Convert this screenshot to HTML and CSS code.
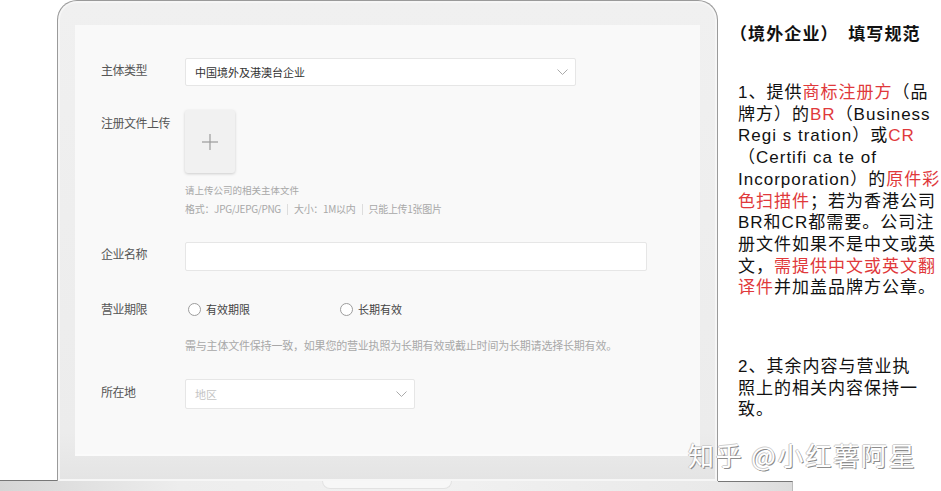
FILE: index.html
```html
<!DOCTYPE html>
<html lang="zh-CN">
  <head>
    <meta charset="UTF-8" />
    <title>境外企业 填写规范</title>
    <link rel="stylesheet" href="styles.css">
  </head>
  <body>
    <div class="scene">
      <div class="top">
        <div class="gutter"></div>

        <div class="lid">
          <div class="screen">
            <div class="row row-type">
              <div class="label">主体类型</div>
              <div class="select select-wide">
                <span>中国境外及港澳台企业</span>
                <svg class="chevron" width="11" height="6" viewBox="0 0 11 6"><polyline points="0.5,0.5 5.5,5.5 10.5,0.5" /></svg>
              </div>
            </div>

            <div class="row row-upload">
              <div class="label">注册文件上传</div>
              <div class="field">
                <div class="upload">
                  <svg width="16" height="16" viewBox="0 0 16 16"><line x1="8" y1="0" x2="8" y2="16" /><line x1="0" y1="8" x2="16" y2="8" /></svg>
                </div>
                <p class="hint hint-small">请上传公司的相关主体文件</p>
                <p class="hint hint-format">格式：JPG/JEPG/PNG<span class="sep"></span>大小：1M以内<span class="sep"></span>只能上传1张图片</p>
              </div>
            </div>

            <div class="row row-name">
              <div class="label">企业名称</div>
              <div class="input"></div>
            </div>

            <div class="row row-term">
              <div class="label">营业期限</div>
              <div class="radios">
                <label class="radio-item"><span class="radio"></span>有效期限</label>
                <label class="radio-item"><span class="radio"></span>长期有效</label>
              </div>
            </div>
            <p class="hint hint-term">需与主体文件保持一致，如果您的营业执照为长期有效或截止时间为长期请选择长期有效。</p>

            <div class="row row-place">
              <div class="label">所在地</div>
              <div class="select select-short">
                <span class="placeholder">地区</span>
                <svg class="chevron" width="11" height="6" viewBox="0 0 11 6"><polyline points="0.5,0.5 5.5,5.5 10.5,0.5" /></svg>
              </div>
            </div>
          </div>
        </div>

        <div class="notes">
          <h2>（境外企业）　填写规范</h2>
          <p class="para">1、提供<em>商标注册方</em>（品<br>牌方）的<em>BR</em>（Business<br>Regi s tration）或<em>CR</em><br>（Certifi ca te of<br>Incorporation）的<em>原件彩<br>色扫描件</em>；若为香港公司<br>BR和CR都需要。公司注<br>册文件如果不是中文或英<br>文，<em>需提供中文或英文翻<br>译件</em>并加盖品牌方公章。</p>
          <p class="para para-two">2、其余内容与营业执<br>照上的相关内容保持一<br>致。</p>
        </div>
      </div>

      <div class="base">
        <div class="base-main"><div class="notch"></div></div>
        <div class="base-end"></div>
      </div>

      <div class="watermark">知乎 @小红薯阿星</div>
    </div>
  </body>
</html>
```

FILE: styles.css
```css
body {
  margin: 0;
  background: #ffffff;
  font-family: "Liberation Sans", "Noto Sans CJK SC", sans-serif;
}

.scene {
  position: relative;
  width: 941px;
  height: 491px;
  overflow: hidden;
}

.top {
  display: flex;
  height: 481px;
}

.gutter {
  width: 57px;
  flex: none;
  border-bottom: 1px solid #777777;
  box-sizing: border-box;
}

/* laptop lid */
.lid {
  width: 661px;
  flex: none;
  box-sizing: border-box;
  border: 1px solid #9a9a9a;
  border-bottom: none;
  border-radius: 20px 20px 0 0;
  padding: 24px 17px 0 17px;
  background: linear-gradient(#f0f0f0, #ececec 90%, #e4e4e4);
  box-shadow: inset 0 0 0 2px #f6f6f6;
}

.screen {
  height: 431px;
  box-sizing: border-box;
  padding: 33px 0 0 26px;
  background: #f9f9f9;
  border-bottom: 2px solid #fbfbfb;
  font-family: "Noto Sans CJK SC", sans-serif;
}

.row {
  display: flex;
  align-items: flex-start;
}

.label {
  width: 84px;
  flex: none;
  font-size: 12px;
  letter-spacing: -0.5px;
  line-height: 16px;
  color: #555555;
}

.select,
.input {
  box-sizing: border-box;
  background: #ffffff;
  border: 1px solid #e6e6e6;
  border-radius: 2px;
}

.select {
  display: flex;
  align-items: center;
  justify-content: space-between;
  padding: 0 7px 0 9px;
  font-size: 11px;
  color: #333333;
}

.select-wide {
  width: 391px;
  height: 28px;
}

.select-short {
  width: 230px;
  height: 30px;
}

.placeholder {
  color: #c4c4c4;
}

.chevron polyline {
  fill: none;
  stroke: #aaaaaa;
  stroke-width: 1;
}

.row-type .label {
  padding-top: 4px;
}

.row-upload {
  margin-top: 24px;
}

.row-upload .label {
  padding-top: 5px;
}

.upload {
  width: 50px;
  height: 63px;
  display: flex;
  align-items: center;
  justify-content: center;
  background: #f1f1f1;
  border-radius: 3px;
  box-shadow: 0 1px 3px rgba(0, 0, 0, 0.18);
}

.upload line {
  stroke: #9c9c9c;
  stroke-width: 1.2;
}

.hint {
  margin: 0;
  color: #a8a8a8;
  line-height: 14px;
}

.hint-small {
  margin-top: 10px;
  font-size: 9.5px;
}

.hint-format {
  margin-top: 5px;
  font-size: 10px;
  letter-spacing: -0.3px;
  display: flex;
  align-items: center;
}

.sep {
  width: 1px;
  height: 11px;
  margin: 0 6px;
  background: #dddddd;
}

.row-name {
  margin-top: 26px;
}

.row-name .label {
  padding-top: 4px;
}

.input {
  width: 462px;
  height: 29px;
}

.row-term {
  margin-top: 29px;
}

.row-term .label {
  line-height: 18px;
}

.radios {
  display: flex;
  padding-left: 3px;
}

.radio-item {
  width: 152px;
  display: flex;
  align-items: center;
  font-size: 11px;
  line-height: 18px;
  color: #444444;
}

.radio {
  width: 13px;
  height: 13px;
  box-sizing: border-box;
  margin-right: 5px;
  border: 1px solid #9d9d9d;
  border-radius: 50%;
  background: #ffffff;
}

.hint-term {
  margin-top: 20px;
  padding-left: 84px;
  font-size: 11px;
  letter-spacing: -0.2px;
}

.row-place {
  margin-top: 27px;
}

.row-place .label {
  padding-top: 5px;
}

/* right column */
.notes {
  margin-left: 20px;
  width: 203px;
  flex: none;
  padding-top: 23px;
  color: #111111;
  white-space: nowrap;
}

.notes h2 {
  margin: 0 0 0 -8px;
  font-size: 17px;
  letter-spacing: 1.1px;
  line-height: 24px;
  font-weight: bold;
}

.para {
  margin: 35px 0 0 0;
  font-size: 17px;
  letter-spacing: 1px;
  line-height: 21.7px;
}

.para em {
  font-style: normal;
  color: #e0393b;
}

.para-two {
  margin-top: 57px;
}

/* laptop base */
.base {
  display: flex;
  height: 10px;
}

.base-main {
  width: 718px;
  background: linear-gradient(90deg, #d6d6d6, #ededed 25%, #f1f1f1 60%, #e9e9e9);
}

.notch {
  width: 130px;
  height: 8px;
  margin-left: 322px;
  box-sizing: border-box;
  border: 1px solid #e2e2e2;
  border-top: none;
  border-radius: 0 0 8px 8px;
  background: #f7f7f7;
}

.base-end {
  width: 75px;
  box-sizing: border-box;
  border-top: 1px solid #777777;
  border-right: 1px solid #bbbbbb;
  background: linear-gradient(90deg, #e9e9e9, #dcdcdc);
}

.watermark {
  position: absolute;
  left: 688px;
  top: 439px;
  font-family: "Noto Sans CJK SC", sans-serif;
  font-size: 26px;
  letter-spacing: 1.8px;
  line-height: 32px;
  color: #ffffff;
  text-shadow: 1px 1px 0 #8c8c8c, -1px 0 0 #c8c8c8, 0 -1px 0 #d0d0d0;
}
```
